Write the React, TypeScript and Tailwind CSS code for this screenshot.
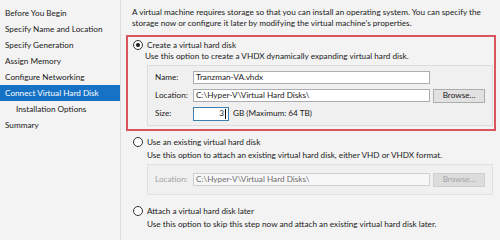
const steps = [
  { label: "Before You Begin" },
  { label: "Specify Name and Location" },
  { label: "Specify Generation" },
  { label: "Assign Memory" },
  { label: "Configure Networking" },
  { label: "Connect Virtual Hard Disk", active: true },
  { label: "Installation Options", sub: true },
  { label: "Summary" },
];

function Radio({ checked }: { checked?: boolean }) {
  return (
    <span className="w-[10px] h-[10px] rounded-full border border-[#333333] bg-white flex items-center justify-center shrink-0">
      {checked && <span className="w-[4px] h-[4px] rounded-full bg-[#1a1a1a]" />}
    </span>
  );
}

export default function App() {
  return (
    <div
      className="w-[500px] h-[240px] flex bg-[#f3f3f3] overflow-hidden text-[8.2px] text-[#1a1a1a]"
      style={{ fontFamily: 'Lato, "Noto Sans", sans-serif' }}
    >
      {/* Wizard steps */}
      <nav className="w-[121px] shrink-0 border-r border-[#dcdcdc] pt-[5px]">
        {steps.map((s) => (
          <div
            key={s.label}
            className={`h-[16px] leading-[16px] whitespace-nowrap ${s.sub ? "pl-[16px]" : "pl-[5px]"} ${
              s.active ? "bg-[#1672c4] text-white" : ""
            }`}
          >
            {s.label}
          </div>
        ))}
      </nav>

      {/* Page */}
      <main className="flex-1 pl-[5px] pr-[4px] pt-[7px]">
        <p className="pl-[6px] leading-[11px]">
          A virtual machine requires storage so that you can install an operating system. You can specify the
          storage now or configure it later by modifying the virtual machine's properties.
        </p>

        <div className="mt-[6px] border-2 border-[#d9545c] pl-[5px] pr-[1px] pt-[2px] pb-[3px]">
          <div className="flex items-center gap-[4px] h-[12px]">
            <Radio checked />
            <span>Create a virtual hard disk</span>
          </div>
          <p className="pl-[12px] leading-[11px]">
            Use this option to create a VHDX dynamically expanding virtual hard disk.
          </p>
          <div className="ml-[14px] mt-[3px] border border-[#dcdcdc] bg-[#f0f0f0] pl-[7px] py-[5px] flex flex-col gap-[5px]">
            <div className="flex items-center h-[13px]">
              <span className="w-[38px]">Name:</span>
              <span className="w-[237px] h-[13px] border border-[#abadb3] bg-white leading-[11px] px-[2px]">
                Tranzman-VA.vhdx
              </span>
            </div>
            <div className="flex items-center h-[13px]">
              <span className="w-[38px]">Location:</span>
              <span className="w-[237px] h-[13px] border border-[#abadb3] bg-white leading-[11px] px-[2px]">
                C:\Hyper-V\Virtual Hard Disks\
              </span>
              <span className="ml-[3px] w-[52px] h-[14px] border border-[#adadad] bg-[#e1e1e1] flex items-center justify-center">
                Browse...
              </span>
            </div>
            <div className="flex items-center h-[13px]">
              <span className="w-[38px]">Size:</span>
              <span className="w-[36px] h-[14px] border border-[#3c7fb1] bg-white flex items-center justify-end pr-[2px]">
                3<span className="w-px h-[10px] bg-black ml-px" />
              </span>
              <span className="ml-[4px]">GB (Maximum: 64 TB)</span>
            </div>
          </div>
        </div>

        <div className="pl-[7px] pr-[3px] mt-[5px]">
          <div className="flex items-center gap-[4px] h-[12px]">
            <Radio />
            <span>Use an existing virtual hard disk</span>
          </div>
          <p className="pl-[14px] mt-[2px] leading-[11px]">
            Use this option to attach an existing virtual hard disk, either VHD or VHDX format.
          </p>
          <div className="ml-[14px] mt-[3px] border border-[#e0e0e0] bg-[#f0f0f0] pl-[7px] py-[8px] text-[#a3a3a3]">
            <div className="flex items-center h-[13px]">
              <span className="w-[38px]">Location:</span>
              <span className="w-[237px] h-[13px] border border-[#cfcfcf] bg-[#f7f7f7] leading-[11px] px-[2px] text-[#6d6d6d]">
                C:\Hyper-V\Virtual Hard Disks\
              </span>
              <span className="ml-[3px] w-[52px] h-[14px] border border-[#cfcfcf] bg-[#dcdcdc] flex items-center justify-center">
                Browse...
              </span>
            </div>
          </div>

          <div className="flex items-center gap-[4px] h-[12px] mt-[10px]">
            <Radio />
            <span>Attach a virtual hard disk later</span>
          </div>
          <p className="pl-[14px] mt-[2px] leading-[11px]">
            Use this option to skip this step now and attach an existing virtual hard disk later.
          </p>
        </div>
      </main>
    </div>
  );
}
